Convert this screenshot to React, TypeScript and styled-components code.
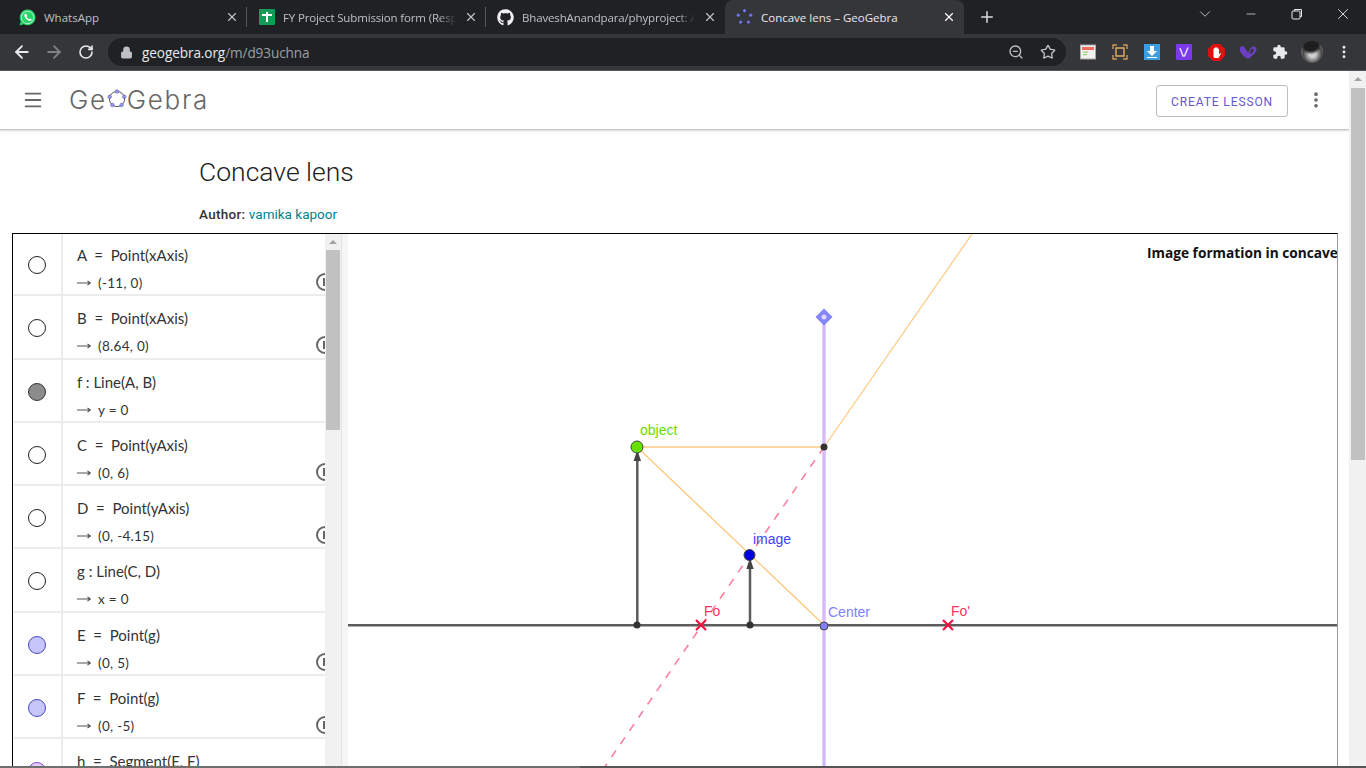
import React from 'react'
import styled, { createGlobalStyle } from 'styled-components'
import { FaGithub } from 'react-icons/fa'
import {
  ArrowLeft,
  ArrowRight,
  RotateCw,
  Lock,
  ZoomOut,
  Star,
  X,
  Plus,
  ChevronDown,
  Minus,
  Menu,
  EllipsisVertical,
} from 'lucide-react'

interface AlgebraItem {
  def: string
  value: string
  fill: string
  stroke: string
  info: boolean
}

const items: AlgebraItem[] = [
  { def: 'A  =  Point(xAxis)', value: '(-11, 0)', fill: '#fff', stroke: '#222', info: true },
  { def: 'B  =  Point(xAxis)', value: '(8.64, 0)', fill: '#fff', stroke: '#222', info: true },
  { def: 'f : Line(A, B)', value: 'y = 0', fill: '#8c8c8c', stroke: '#333', info: false },
  { def: 'C  =  Point(yAxis)', value: '(0, 6)', fill: '#fff', stroke: '#222', info: true },
  { def: 'D  =  Point(yAxis)', value: '(0, -4.15)', fill: '#fff', stroke: '#222', info: true },
  { def: 'g : Line(C, D)', value: 'x = 0', fill: '#fff', stroke: '#222', info: false },
  { def: 'E  =  Point(g)', value: '(0, 5)', fill: '#c6c6fb', stroke: '#4646c4', info: true },
  { def: 'F  =  Point(g)', value: '(0, -5)', fill: '#c6c6fb', stroke: '#4646c4', info: true },
  { def: 'h  =  Segment(E, F)', value: '', fill: '#e2cdfb', stroke: '#7a4cc4', info: false },
]

const GlobalStyle = createGlobalStyle`
  html, body {
    margin: 0;
    height: 100%;
    overflow: hidden;
    background: #fff;
  }
  * {
    box-sizing: border-box;
  }
`

const Shell = styled.div`
  width: 1366px;
  height: 768px;
  display: flex;
  flex-direction: column;
  overflow: hidden;
  font-family: 'Roboto', 'Liberation Sans', sans-serif;
`

const TabBar = styled.div`
  height: 34px;
  flex-shrink: 0;
  background: #202124;
  display: flex;
  align-items: stretch;
  padding-left: 8px;
`

const Tab = styled.div<{ $active?: boolean }>`
  width: 239px;
  padding: 0 8px 0 11px;
  display: flex;
  align-items: center;
  gap: 8px;
  position: relative;
  border-radius: 8px 8px 0 0;
  background: ${(p) => (p.$active ? '#35363a' : 'transparent')};
  color: ${(p) => (p.$active ? '#e8eaed' : '#bdc1c6')};
`

const TabDivider = styled.span`
  position: absolute;
  right: 0;
  top: 7px;
  width: 1px;
  height: 20px;
  background: #54565a;
`

const Favicon = styled.span`
  width: 17px;
  height: 17px;
  flex-shrink: 0;
  display: flex;
  align-items: center;
  justify-content: center;
`

const TabTitle = styled.span<{ $fade?: boolean }>`
  flex: 1;
  min-width: 0;
  font: 11.5px 'Open Sans', 'Liberation Sans', sans-serif;
  letter-spacing: ${(p) => (p.$fade ? '-0.15px' : '0')};
  white-space: nowrap;
  -webkit-mask-image: ${(p) =>
    p.$fade ? 'linear-gradient(90deg, #000 90%, transparent 100%)' : 'none'};
  mask-image: ${(p) =>
    p.$fade ? 'linear-gradient(90deg, #000 90%, transparent 100%)' : 'none'};
`

const TabClose = styled(X)`
  flex-shrink: 0;
`

const NewTab = styled.div`
  width: 44px;
  margin-left: 1px;
  display: flex;
  align-items: center;
  justify-content: center;
  color: #dadce0;
`

const WindowControls = styled.div`
  margin-left: auto;
  display: flex;
  align-items: flex-start;
  color: #e8eaed;
`

const WindowButton = styled.div`
  width: 46px;
  height: 28px;
  display: flex;
  align-items: center;
  justify-content: center;
`

const Toolbar = styled.div`
  height: 37px;
  flex-shrink: 0;
  background: #35363a;
  border-bottom: 1px solid #57585c;
  display: flex;
  align-items: flex-start;
  padding-top: 4px;
  padding-left: 6px;
`

const NavButton = styled.div<{ $muted?: boolean }>`
  width: 32px;
  height: 28px;
  display: flex;
  align-items: center;
  justify-content: center;
  color: ${(p) => (p.$muted ? '#7f8184' : '#e8eaed')};
`

const Omnibox = styled.div`
  width: 958px;
  height: 28px;
  margin-left: 6px;
  margin-right: 6px;
  border-radius: 14px;
  background: #202124;
  display: flex;
  align-items: center;
  padding: 0 2px 0 12px;
  color: #bdc1c6;
`

const Url = styled.div`
  flex: 1;
  margin-left: 9px;
  font: 13.6px 'Open Sans', 'Liberation Sans', sans-serif;
  letter-spacing: -0.1px;
  color: #9aa0a6;
  & b {
    font-weight: 400;
    color: #e8eaed;
  }
`

const OmniIcon = styled.div`
  width: 32px;
  display: flex;
  justify-content: center;
`

const ExtButton = styled.div`
  width: 32px;
  height: 28px;
  display: flex;
  align-items: center;
  justify-content: center;
  color: #e8eaed;
`

const Avatar = styled.div`
  width: 22px;
  height: 22px;
  border-radius: 50%;
  background: radial-gradient(circle at 45% 12%, #1e1e1e 0 32%, transparent 48%),
    radial-gradient(circle at 52% 60%, #cfcfcf 0 18%, #4a4a4a 52%, #9c9c9c 100%);
`

const PageArea = styled.div`
  flex: 1;
  min-height: 0;
  display: flex;
  background: #fff;
`

const Page = styled.div`
  flex: 1;
  min-width: 0;
  display: flex;
  flex-direction: column;
`

const Header = styled.header`
  height: 59px;
  flex-shrink: 0;
  display: flex;
  align-items: center;
  padding: 0 27px 0 22px;
  border-bottom: 1px solid #c6c6c6;
  box-shadow: 0 1px 2px rgba(0, 0, 0, 0.16);
  color: #666;
`

const Logo = styled.div`
  margin-left: 25px;
  margin-top: -2px;
  display: flex;
  align-items: center;
  font: 300 26px 'Inter', 'Liberation Sans', sans-serif;
  color: #666;
  letter-spacing: 1.7px;
`

const CreateButton = styled.div`
  margin-left: auto;
  margin-top: 2px;
  width: 132px;
  height: 32px;
  border: 1px solid #bdbdbd;
  border-radius: 3px;
  display: flex;
  align-items: center;
  justify-content: center;
  padding-top: 1px;
  font: 400 12px 'Roboto', sans-serif;
  letter-spacing: 0.9px;
  color: #6557d2;
`

const MoreButton = styled.div`
  width: 20px;
  margin-left: 18px;
  margin-right: -4px;
  display: flex;
  justify-content: center;
  color: #666;
`

const TitleBlock = styled.div`
  height: 103px;
  flex-shrink: 0;
  padding: 25px 0 0 199px;
`

const Title = styled.h1`
  margin: 0;
  font: 300 26.5px/34px 'Roboto', sans-serif;
  color: #212121;
`

const Author = styled.div`
  margin-top: 16px;
  font: 400 13.5px/18px 'Roboto', sans-serif;
  color: #333;
  & b {
    font-weight: 500;
    letter-spacing: 0.3px;
  }
  & a {
    color: #00838f;
    text-decoration: none;
  }
`

const Applet = styled.div`
  flex: 1;
  min-height: 0;
  margin: 0 11px 0 12px;
  border-top: 1px solid #000;
  border-left: 1px solid #000;
  border-right: 1px solid #9a9a9a;
  display: flex;
  overflow: hidden;
`

const AlgebraPanel = styled.div`
  width: 312px;
  flex-shrink: 0;
  margin-top: -1px;
  display: flex;
  flex-direction: column;
  overflow: hidden;
`

const Row = styled.div`
  height: 63.25px;
  flex-shrink: 0;
  display: flex;
  border-bottom: 2px solid #ececec;
`

const MarbleCell = styled.div`
  width: 50px;
  flex-shrink: 0;
  border-right: 2px solid #ececec;
  display: flex;
  align-items: center;
  justify-content: center;
  padding-top: 3px;
`

const Marble = styled.span<{ $fill: string; $stroke: string }>`
  width: 18px;
  height: 18px;
  border-radius: 50%;
  background: ${(p) => p.$fill};
  border: 1px solid ${(p) => p.$stroke};
`

const RowBody = styled.div`
  flex: 1;
  min-width: 0;
  position: relative;
  padding: 12px 0 0 14px;
  font: 15px/21px 'Lato', 'Liberation Sans', sans-serif;
  color: #333;
  white-space: pre;
`

const RowValue = styled.div`
  margin-top: 7px;
  font-size: 13.5px;
  line-height: 20px;
  letter-spacing: 0.3px;
  display: flex;
  align-items: center;
  gap: 7px;
`

const ValueArrow = styled.svg`
  flex-shrink: 0;
  color: #555;
`

const InfoBadge = styled.span`
  position: absolute;
  left: 253px;
  top: 40px;
  width: 18px;
  height: 18px;
  border-radius: 50%;
  border: 2px solid #666;
  &::after {
    content: '';
    position: absolute;
    left: 5px;
    top: 3px;
    width: 2px;
    height: 8px;
    background: #666;
  }
`

const PanelScrollbar = styled.div`
  width: 17px;
  flex-shrink: 0;
  background: #f1f1f1;
  display: flex;
  flex-direction: column;
  align-items: center;
  border-right: 1px solid #e4e4e4;
`

const UpArrow = styled.span`
  margin-top: 6px;
  width: 0;
  height: 0;
  border-left: 4px solid transparent;
  border-right: 4px solid transparent;
  border-bottom: 4px solid #a3a3a3;
`

const PanelThumb = styled.div`
  margin-top: 6px;
  width: 14px;
  height: 180px;
  background: #c1c1c1;
`

const Splitter = styled.div`
  width: 6px;
  flex-shrink: 0;
  background: #f5f5f5;
`

const Canvas = styled.div`
  flex: 1;
  min-width: 0;
  overflow: hidden;
`

const CanvasSvg = styled.svg`
  display: block;
  width: 100%;
  height: 100%;
`

const PageScrollbar = styled.div`
  width: 17px;
  flex-shrink: 0;
  background: #f1f1f1;
  display: flex;
  flex-direction: column;
  align-items: center;
  padding-left: 1px;
`

const PageThumb = styled.div`
  margin-top: 7px;
  width: 14px;
  height: 372px;
  background: #c1c1c1;
`

const BottomEdge = styled.div`
  height: 2px;
  flex-shrink: 0;
  background: linear-gradient(90deg, #6f6f6f 0 580px, #555 580px);
`

// the ring with five dots used in the logo and in the tab icon
function GeoMark({ size, line, dot }: { size: number; line: string; dot: string }): JSX.Element {
  const pts: Array<[number, number]> = [
    [10, 2.5],
    [17.3, 7.8],
    [14.6, 16],
    [5.4, 16],
    [2.7, 7.8],
  ]
  return (
    <svg width={size} height={size} viewBox="0 0 20 20">
      <circle cx="10" cy="10" r="7.600" fill="none" stroke={line} strokeWidth="1" />
      {pts.map((p, i) => (
        <circle key={i} cx={p[0]} cy={p[1]} r="1.800" fill={dot} stroke="#4a4aa0" strokeWidth="0.5" />
      ))}
    </svg>
  )
}

function WhatsAppIcon(): JSX.Element {
  return (
    <svg width="17" height="17" viewBox="0 0 17 17">
      <path d="M0.500 16.500L1.700 12.200A7.900 7.900 0 1 1 4.800 15.300Z" fill="#25d366" />
      <circle cx="8.500" cy="8.500" r="6.200" fill="none" stroke="#d8f5e2" strokeWidth="0.8" />
      <path
        d="M6 4.700c-.9.800-1 2.100.1 3.800 1.100 1.700 2.700 3.200 4.500 3.500 1.100.1 2-.4 2.300-1.400l-1.900-1.200-.8.8c-1.100-.4-2.100-1.400-2.600-2.500l.8-.8L7.200 4.700z"
        fill="#fff"
      />
    </svg>
  )
}

function SheetsIcon(): JSX.Element {
  return (
    <svg width="16" height="16" viewBox="0 0 16 16">
      <rect width="16" height="16" rx="1" fill="#0f9d58" />
      <rect x="3" y="5" width="10" height="2" fill="#fff" />
      <rect x="7" y="3" width="2" height="10" fill="#fff" />
    </svg>
  )
}

function RestoreIcon(): JSX.Element {
  return (
    <svg width="12" height="12" viewBox="0 0 12 12" fill="none" stroke="currentColor">
      <rect x="1" y="3" width="8" height="8" rx="1" />
      <path d="M3.500 3V1.500h7V8.500H9" />
    </svg>
  )
}

function ExtNote(): JSX.Element {
  return (
    <svg width="16" height="16" viewBox="0 0 16 16">
      <rect x="0.500" y="1" width="15" height="14" fill="#f1f1ee" stroke="#a8a8a8" />
      <rect x="2" y="3" width="12" height="3" fill="#ef6a5f" />
      <rect x="3" y="7.500" width="5" height="1.200" fill="#9ccc65" />
      <rect x="3" y="10" width="4" height="1.200" fill="#9ccc65" />
    </svg>
  )
}

function ExtCapture(): JSX.Element {
  return (
    <svg width="16" height="16" viewBox="0 0 16 16" fill="none" stroke="#c99a5b" strokeWidth="1.400">
      <path d="M1 5V1h4M11 1h4v4M15 11v4h-4M5 15H1v-4" />
      <path d="M4 4h8v8H4z" stroke="#e0ad68" />
      <rect x="6" y="6.500" width="3" height="2.500" fill="#333" stroke="none" />
    </svg>
  )
}

function ExtDownload(): JSX.Element {
  return (
    <svg width="16" height="16" viewBox="0 0 16 16">
      <rect width="16" height="16" fill="#3a9ee0" />
      <path d="M6 2h4v5h3l-5 5-5-5h3z" fill="#fff" />
      <rect x="3" y="13" width="10" height="1" fill="#fff" />
    </svg>
  )
}

function ExtVimeo(): JSX.Element {
  return (
    <svg width="16" height="16" viewBox="0 0 16 16">
      <rect width="16" height="16" rx="1" fill="#7c3aed" />
      <path d="M4 4l3 8h1.500L12 3.500" fill="none" stroke="#e6dcfb" strokeWidth="1.500" />
    </svg>
  )
}

function ExtAdblock(): JSX.Element {
  return (
    <svg width="17" height="17" viewBox="0 0 17 17">
      <polygon points="5,0 12,0 17,5 17,12 12,17 5,17 0,12 0,5" fill="#e0100f" />
      <path
        d="M5.500 8V5a.7.7 0 011.400 0V4a.7.7 0 011.400 0v0a.7.7 0 011.400 0V5a.7.7 0 011.300 0v5.500l1-1.300c.6-.5 1.200 0 .9.6L10.500 14H7c-1 0-1.500-1-1.500-2z"
        fill="#fff"
      />
    </svg>
  )
}

function ExtHeart(): JSX.Element {
  return (
    <svg width="18" height="14" viewBox="0 0 18 14">
      <path
        d="M1 2.500C2.500.5 5 1 6 3l3 5 2-4c1-2 3.500-3.500 5.500-2 2 2 .5 5-1.500 7l-5 4.500H8C5 11.500 2.500 9 1 6z"
        fill="#6d3fc4"
      />
      <path d="M11.500 5c.8-1.500 3-1.500 3.300 0 .2 1.300-1.500 3-3.800 4.500z" fill="#35363a" />
    </svg>
  )
}

function ExtPuzzle(): JSX.Element {
  return (
    <svg width="16" height="16" viewBox="0 0 24 24" fill="#e8eaed">
      <path d="M20.500 11H19V7a2 2 0 00-2-2h-4V3.500a2.500 2.500 0 00-5 0V5H4a2 2 0 00-2 2v3.800h1.500a2.700 2.700 0 010 5.400H2V20a2 2 0 002 2h3.800v-1.500a2.700 2.700 0 015.400 0V22H17a2 2 0 002-2v-4h1.500a2.500 2.500 0 000-5z" />
    </svg>
  )
}

function Cross({ x, y }: { x: number; y: number }): JSX.Element {
  return (
    <path
      d={`M${x - 5} ${y - 5}L${x + 5} ${y + 5}M${x - 5} ${y + 5}L${x + 5} ${y - 5}`}
      stroke="#f3123f"
      strokeWidth="2.200"
    />
  )
}

function LensDiagram(): JSX.Element {
  const labelFont = "'Liberation Sans', Arial, sans-serif"
  return (
    <CanvasSvg viewBox="348 234 989 532" preserveAspectRatio="xMinYMin slice">
      <line x1="348" y1="625.300" x2="1337" y2="625.300" stroke="#5c5c5c" strokeWidth="2.500" />
      <line x1="824" y1="317" x2="824" y2="768" stroke="#d7bbfd" strokeWidth="3.500" />
      <path d="M824 308.500L832.500 317L824 325.500L815.500 317Z" fill="#8585fb" />
      <circle cx="824" cy="317" r="2.500" fill="#e5d5fd" />
      <line x1="824" y1="447" x2="972" y2="234" stroke="#fdc980" strokeWidth="1.200" />
      <line x1="637" y1="447" x2="824" y2="447" stroke="#fdd8a5" strokeWidth="2" />
      <line x1="637" y1="447" x2="824" y2="625" stroke="#fdc980" strokeWidth="1.400" />
      <line
        x1="824"
        y1="447"
        x2="604"
        y2="768"
        stroke="#ff7f9f"
        strokeWidth="1.600"
        strokeDasharray="8 8"
      />
      <line x1="637.300" y1="625" x2="637.300" y2="460" stroke="#5c5c5c" strokeWidth="2.500" />
      <path d="M637.300 450L641 461H633.600Z" fill="#444" />
      <line x1="750" y1="625" x2="750" y2="568" stroke="#5c5c5c" strokeWidth="2.500" />
      <path d="M750 558L753.700 569H746.300Z" fill="#444" />
      <circle cx="637" cy="625" r="3.500" fill="#333" />
      <circle cx="750" cy="625" r="3.500" fill="#333" />
      <circle cx="824" cy="447" r="3.500" fill="#333" />
      <circle cx="824" cy="626" r="4" fill="#8080ff" stroke="#444" />
      <circle cx="637" cy="447" r="6" fill="#66e000" stroke="#444" />
      <circle cx="749.500" cy="555" r="5.500" fill="#0000e6" stroke="#444" />
      <Cross x={701} y={625} />
      <Cross x={948} y={625} />
      <g fontFamily={labelFont} fontSize="14">
        <text x="640" y="435" fill="#66e000">
          object
        </text>
        <text x="753" y="544" fill="#4040ff">
          image
        </text>
        <text x="704" y="616" fill="#ff3366">
          Fo
        </text>
        <text x="951" y="616" fill="#ff3366">
          Fo'
        </text>
        <text x="828" y="617" fill="#8080ff">
          Center
        </text>
      </g>
      <text
        x="1147"
        y="258"
        fontFamily="'Open Sans', sans-serif"
        fontSize="13.700"
        fontWeight="700"
        fill="#111"
      >
        Image formation in concave
      </text>
    </CanvasSvg>
  )
}

export default function App(): JSX.Element {
  return (
    <Shell>
      <GlobalStyle />
      <TabBar>
        <Tab>
          <Favicon>
            <WhatsAppIcon />
          </Favicon>
          <TabTitle>WhatsApp</TabTitle>
          <TabClose size={14} />
          <TabDivider />
        </Tab>
        <Tab>
          <Favicon>
            <SheetsIcon />
          </Favicon>
          <TabTitle $fade>FY Project Submission form (Resp</TabTitle>
          <TabClose size={14} />
          <TabDivider />
        </Tab>
        <Tab>
          <Favicon>
            <FaGithub size={17} color="#f1f1f1" />
          </Favicon>
          <TabTitle $fade>BhaveshAnandpara/phyproject: A</TabTitle>
          <TabClose size={14} />
        </Tab>
        <Tab $active>
          <Favicon>
            <GeoMark size={18} line="#2a2c3c" dot="#7c7cf0" />
          </Favicon>
          <TabTitle>Concave lens – GeoGebra</TabTitle>
          <TabClose size={14} color="#fff" />
        </Tab>
        <NewTab>
          <Plus size={18} />
        </NewTab>
        <WindowControls>
          <WindowButton>
            <ChevronDown size={18} strokeWidth={1} />
          </WindowButton>
          <WindowButton>
            <Minus size={14} strokeWidth={1.2} />
          </WindowButton>
          <WindowButton>
            <RestoreIcon />
          </WindowButton>
          <WindowButton>
            <X size={18} strokeWidth={1.2} />
          </WindowButton>
        </WindowControls>
      </TabBar>
      <Toolbar>
        <NavButton>
          <ArrowLeft size={20} strokeWidth={2.2} />
        </NavButton>
        <NavButton $muted>
          <ArrowRight size={20} strokeWidth={2.2} />
        </NavButton>
        <NavButton>
          <RotateCw size={16} strokeWidth={2.4} />
        </NavButton>
        <Omnibox>
          <Lock size={13} fill="#bdc1c6" strokeWidth={2} />
          <Url>
            <b>geogebra.org</b>/m/d93uchna
          </Url>
          <OmniIcon>
            <ZoomOut size={16} />
          </OmniIcon>
          <OmniIcon>
            <Star size={16} />
          </OmniIcon>
        </Omnibox>
        <ExtButton>
          <ExtNote />
        </ExtButton>
        <ExtButton>
          <ExtCapture />
        </ExtButton>
        <ExtButton>
          <ExtDownload />
        </ExtButton>
        <ExtButton>
          <ExtVimeo />
        </ExtButton>
        <ExtButton>
          <ExtAdblock />
        </ExtButton>
        <ExtButton>
          <ExtHeart />
        </ExtButton>
        <ExtButton>
          <ExtPuzzle />
        </ExtButton>
        <ExtButton>
          <Avatar />
        </ExtButton>
        <ExtButton>
          <EllipsisVertical size={16} strokeWidth={2.4} />
        </ExtButton>
      </Toolbar>
      <PageArea>
        <Page>
          <Header>
            <Menu size={22} strokeWidth={2} />
            <Logo>
              Ge
              <GeoMark size={20} line="#555" dot="#9a9aee" />
              Gebra
            </Logo>
            <CreateButton>CREATE LESSON</CreateButton>
            <MoreButton>
              <EllipsisVertical size={20} strokeWidth={2.4} />
            </MoreButton>
          </Header>
          <TitleBlock>
            <Title>Concave lens</Title>
            <Author>
              <b>Author:</b> <a href="#author">vamika kapoor</a>
            </Author>
          </TitleBlock>
          <Applet>
            <AlgebraPanel>
              {items.map((item) => (
                <Row key={item.def}>
                  <MarbleCell>
                    <Marble $fill={item.fill} $stroke={item.stroke} />
                  </MarbleCell>
                  <RowBody>
                    {item.def}
                    {item.value !== '' && (
                      <RowValue>
                        <ValueArrow width="14" height="8" viewBox="0 0 14 8">
                          <path
                            d="M0 4H13M10.500 2L13.500 4L10.500 6"
                            fill="none"
                            stroke="currentColor"
                            strokeWidth="1.100"
                          />
                        </ValueArrow>
                        <span>{item.value}</span>
                      </RowValue>
                    )}
                    {item.info && <InfoBadge />}
                  </RowBody>
                </Row>
              ))}
            </AlgebraPanel>
            <PanelScrollbar>
              <UpArrow />
              <PanelThumb />
            </PanelScrollbar>
            <Splitter />
            <Canvas>
              <LensDiagram />
            </Canvas>
          </Applet>
        </Page>
        <PageScrollbar>
          <UpArrow />
          <PageThumb />
        </PageScrollbar>
      </PageArea>
      <BottomEdge />
    </Shell>
  )
}
